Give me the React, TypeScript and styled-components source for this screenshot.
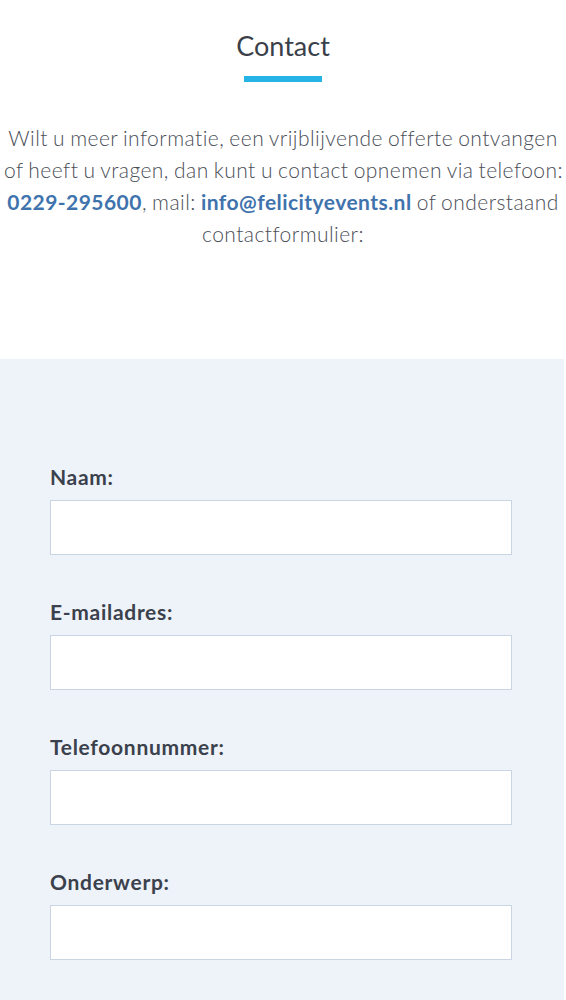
import styled, { createGlobalStyle } from "styled-components";

const Global = createGlobalStyle`
  body {
    margin: 0;
    background: #fff;
    font-family: Lato, "Open Sans", sans-serif;
  }
`;

const Intro = styled.section`
  padding: 28px 4px 0;
  height: 359px;
  box-sizing: border-box;
  text-align: center;
`;

const Title = styled.h1`
  margin: 0;
  font-size: 27px;
  font-weight: 400;
  line-height: 36px;
  color: #3a3f4a;
`;

const Bar = styled.div`
  width: 78px;
  height: 6px;
  margin: 12px auto 0;
  background: #26b4e6;
`;

const Lead = styled.p`
  margin: 40px 0 0;
  font-size: 21px;
  font-weight: 300;
  line-height: 32px;
  letter-spacing: 0.45px;
  word-spacing: -1px;
  white-space: nowrap;
  color: #4a4e57;
`;

const Link = styled.a`
  color: #3f73ad;
  font-weight: 700;
  text-decoration: none;
`;

const FormArea = styled.section`
  background: #eef3f9;
  margin-right: 2px;
  padding: 106px 52px 40px 50px;
  min-height: 641px;
  box-sizing: border-box;
`;

const Field = styled.div`
  display: flex;
  flex-direction: column;
  gap: 11px;
  margin-bottom: 45px;
`;

const Label = styled.label`
  font-size: 21px;
  font-weight: 700;
  line-height: 24px;
  letter-spacing: 0.7px;
  color: #3b414c;
`;

const Input = styled.input`
  height: 55px;
  box-sizing: border-box;
  border: 1px solid #c9d5e2;
  background: #fff;
  font: inherit;
  padding: 0 12px;
  outline: none;
`;

const fields = ["Naam:", "E-mailadres:", "Telefoonnummer:", "Onderwerp:"];

export default function App() {
  return (
    <>
      <Global />
      <Intro>
        <Title>Contact</Title>
        <Bar />
        <Lead>
          Wilt u meer informatie, een vrijblijvende offerte ontvangen
          <br />
          of heeft u vragen, dan kunt u contact opnemen via telefoon:
          <br />
          <Link href="#">0229-295600</Link>, mail:{" "}
          <Link href="#">info@felicityevents.nl</Link> of onderstaand
          <br />
          contactformulier:
        </Lead>
      </Intro>
      <FormArea>
        {fields.map((f) => (
          <Field key={f}>
            <Label>{f}</Label>
            <Input type="text" />
          </Field>
        ))}
      </FormArea>
    </>
  );
}
